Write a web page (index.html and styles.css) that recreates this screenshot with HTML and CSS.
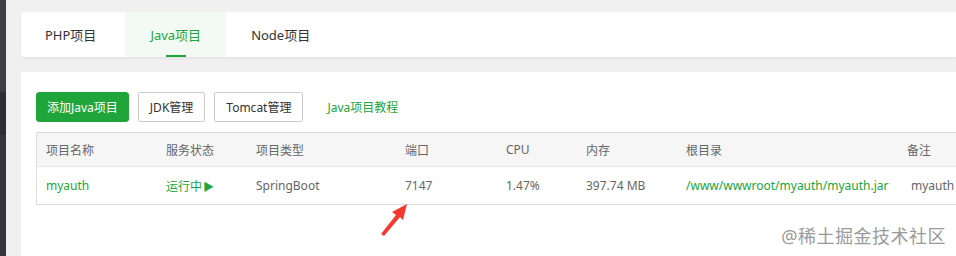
FILE: index.html
```html
<!DOCTYPE html>
<html lang="zh-CN">
<head>
<meta charset="utf-8">
<title>Java项目</title>
<link rel="stylesheet" href="styles.css">
</head>
<body>
<div class="sidebar"></div>
<main class="main">
  <nav class="tabs">
    <div class="tab">PHP项目</div>
    <div class="tab active">Java项目</div>
    <div class="tab">Node项目</div>
  </nav>
  <section class="card">
    <div class="toolbar">
      <button class="btn btn-primary">添加Java项目</button>
      <button class="btn">JDK管理</button>
      <button class="btn">Tomcat管理</button>
      <a class="link">Java项目教程</a>
    </div>
    <table class="table">
      <thead>
        <tr>
          <th class="c1">项目名称</th>
          <th class="c2">服务状态</th>
          <th class="c3">项目类型</th>
          <th class="c4">端口</th>
          <th class="c5">CPU</th>
          <th class="c6">内存</th>
          <th class="c7">根目录</th>
          <th class="c8">备注</th>
        </tr>
      </thead>
      <tbody>
        <tr>
          <td class="green">myauth</td>
          <td class="green">运行中<span class="play">▶</span></td>
          <td>SpringBoot</td>
          <td>7147</td>
          <td>1.47%</td>
          <td>397.74 MB</td>
          <td class="green">/www/wwwroot/myauth/myauth.jar</td>
          <td class="note">myauth</td>
        </tr>
      </tbody>
    </table>
    <svg class="arrow" width="32" height="36" viewBox="0 0 32 36">
      <path d="M2 33 L17 14 L13 11 L28 3 L24 19 L21 16 L5 35 Z" fill="#f43a2f"/>
    </svg>
    <div class="watermark">@稀土掘金技术社区</div>
  </section>
</main>
</body>
</html>
```
FILE: styles.css
```css
html, body {
  margin: 0;
  height: 100%;
  overflow: hidden;
}
body {
  display: flex;
  background: #f0f0f0;
  font-family: "Noto Sans", "Noto Sans CJK SC", sans-serif;
  color: #555;
}
.sidebar {
  width: 6px;
  flex: none;
  background: linear-gradient(#3c3f44 0, #3c3f44 92px, #2b2e33 92px, #2b2e33 135px, #34373c 135px);
}
.main {
  flex: 1;
  padding: 12px 0 0 15px;
  min-width: 0;
}
.tabs {
  display: flex;
  height: 45px;
  background: #fff;
  border-radius: 4px 0 0 4px;
  box-shadow: 0 2px 3px rgba(0, 0, 0, 0.05);
}
.tab {
  position: relative;
  display: flex;
  align-items: center;
  padding: 0 25px;
  font-size: 13px;
  color: #333;
}
.tab:first-child { padding: 0 29px 0 24px; }
.tab.active {
  color: #20a53a;
  background: #f3faf4;
}
.tab.active::after {
  content: "";
  position: absolute;
  left: 50%;
  bottom: 0;
  width: 20px;
  margin-left: -10px;
  height: 2px;
  background: #20a53a;
}
.card {
  position: relative;
  margin-top: 15px;
  background: #fff;
  height: 184px;
  padding: 20px 0 0 15px;
  box-sizing: border-box;
  overflow: hidden;
}
.toolbar {
  display: flex;
  align-items: center;
  gap: 8px;
  height: 30px;
}
.btn {
  height: 30px;
  padding: 0 11px;
  border: 1px solid #ccc;
  border-radius: 2px;
  background: #fff;
  font-family: inherit;
  font-size: 12px;
  color: #333;
}
.btn + .btn { margin-left: 1px; }
.btn-primary {
  background: #20a53a;
  border-color: #20a53a;
  color: #fff;
  padding: 0 10px;
  border-radius: 3px;
}
.link {
  margin-left: 16px;
  font-size: 12px;
  color: #20a53a;
}
.table {
  margin-top: 10px;
  border-collapse: collapse;
  font-size: 12px;
  width: 960px;
  table-layout: fixed;
  border: 1px solid #ddd;
}
.table thead tr { height: 34px; }
.table tbody tr { height: 38px; }
.table th {
  background: #f6f6f6;
  font-weight: normal;
  color: #666;
  text-align: left;
  padding: 0 0 0 9px;
  border-bottom: 1px solid #e6e6e6;
}
.table td {
  padding: 0 0 0 9px;
  color: #666;
  white-space: nowrap;
}
.c1 { width: 111px; }
.c2 { width: 81px; }
.c3 { width: 140px; }
.c4 { width: 92px; }
.c5 { width: 71px; }
.c6 { width: 91px; }
.c7 { width: 212px; }
.table td.green { color: #20a53a; }
.play { font-size: 11px; margin-left: 1px; }
.table td.note { padding-left: 13px; }
.arrow {
  position: absolute;
  left: 358px;
  top: 129px;
}
.watermark {
  position: absolute;
  right: 10px;
  top: 150px;
  font-size: 18px;
  color: #9a9a9a;
  letter-spacing: 0.5px;
}
```
